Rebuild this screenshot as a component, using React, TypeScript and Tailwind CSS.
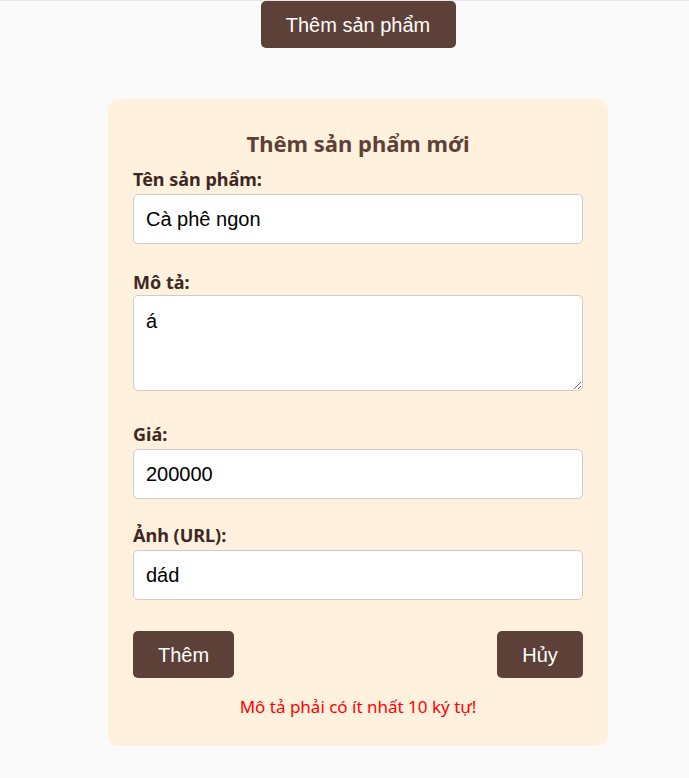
import React from "react";

const ui = { fontFamily: '"Noto Sans", "Open Sans", sans-serif' };
const arial = { fontFamily: '"Liberation Sans", Arial, sans-serif' };

const inputCls =
  "mt-[3px] block h-[50px] w-full rounded-[5px] border border-[#cccccc] bg-white px-[12px] text-[20px] text-black outline-none";

function Field({
  label,
  className,
  children,
}: {
  label: string;
  className?: string;
  children: React.ReactNode;
}) {
  return (
    <div className={className}>
      <label className="block text-[18px] font-bold leading-[24px] text-[#3e2723]" style={ui}>
        {label}
      </label>
      {children}
    </div>
  );
}

export default function App() {
  return (
    <div className="min-h-[778px] bg-[#fafafa] border-t border-[#e6e6e6]">
      <div className="w-[500px] ml-[108px]">
        <div className="flex justify-center">
          <button
            type="button"
            className="h-[47px] w-[195px] rounded-[5px] bg-[#5d4037] text-white text-[20px]"
            style={arial}
          >
            Thêm sản phẩm
          </button>
        </div>

        <div className="mt-[51px] rounded-[10px] bg-[#fff1de] px-[25px] pt-[29px] pb-[27px]">
          <h2
            className="text-center text-[22px] font-bold leading-[30px] text-[#5d4037]"
            style={ui}
          >
            Thêm sản phẩm mới
          </h2>

          <Field label="Tên sản phẩm:" className="mt-[9px]">
            <input readOnly value="Cà phê ngon" className={inputCls} style={arial} />
          </Field>

          <Field label="Mô tả:" className="mt-[26px]">
            <textarea
              readOnly
              value="á"
              className="mt-[1px] block h-[96px] w-full rounded-[5px] border border-[#cccccc] bg-white px-[12px] py-[10px] text-[20px] text-black outline-none"
              style={arial}
            />
          </Field>

          <Field label="Giá:" className="mt-[31px]">
            <input readOnly value="200000" className={inputCls} style={arial} />
          </Field>

          <Field label="Ảnh (URL):" className="mt-[24px]">
            <input readOnly value="dád" className={inputCls} style={arial} />
          </Field>

          <div className="mt-[31px] flex items-center justify-between">
            <button
              type="button"
              className="h-[47px] w-[101px] rounded-[5px] bg-[#5d4037] text-white text-[20px]"
              style={arial}
            >
              Thêm
            </button>
            <button
              type="button"
              className="h-[47px] w-[86px] rounded-[5px] bg-[#5d4037] text-white text-[20px]"
              style={arial}
            >
              Hủy
            </button>
          </div>

          <p
            className="mt-[17px] text-center text-[17px] leading-[24px] text-[#ff0000]"
            style={ui}
          >
            Mô tả phải có ít nhất 10 ký tự!
          </p>
        </div>
      </div>
    </div>
  );
}
